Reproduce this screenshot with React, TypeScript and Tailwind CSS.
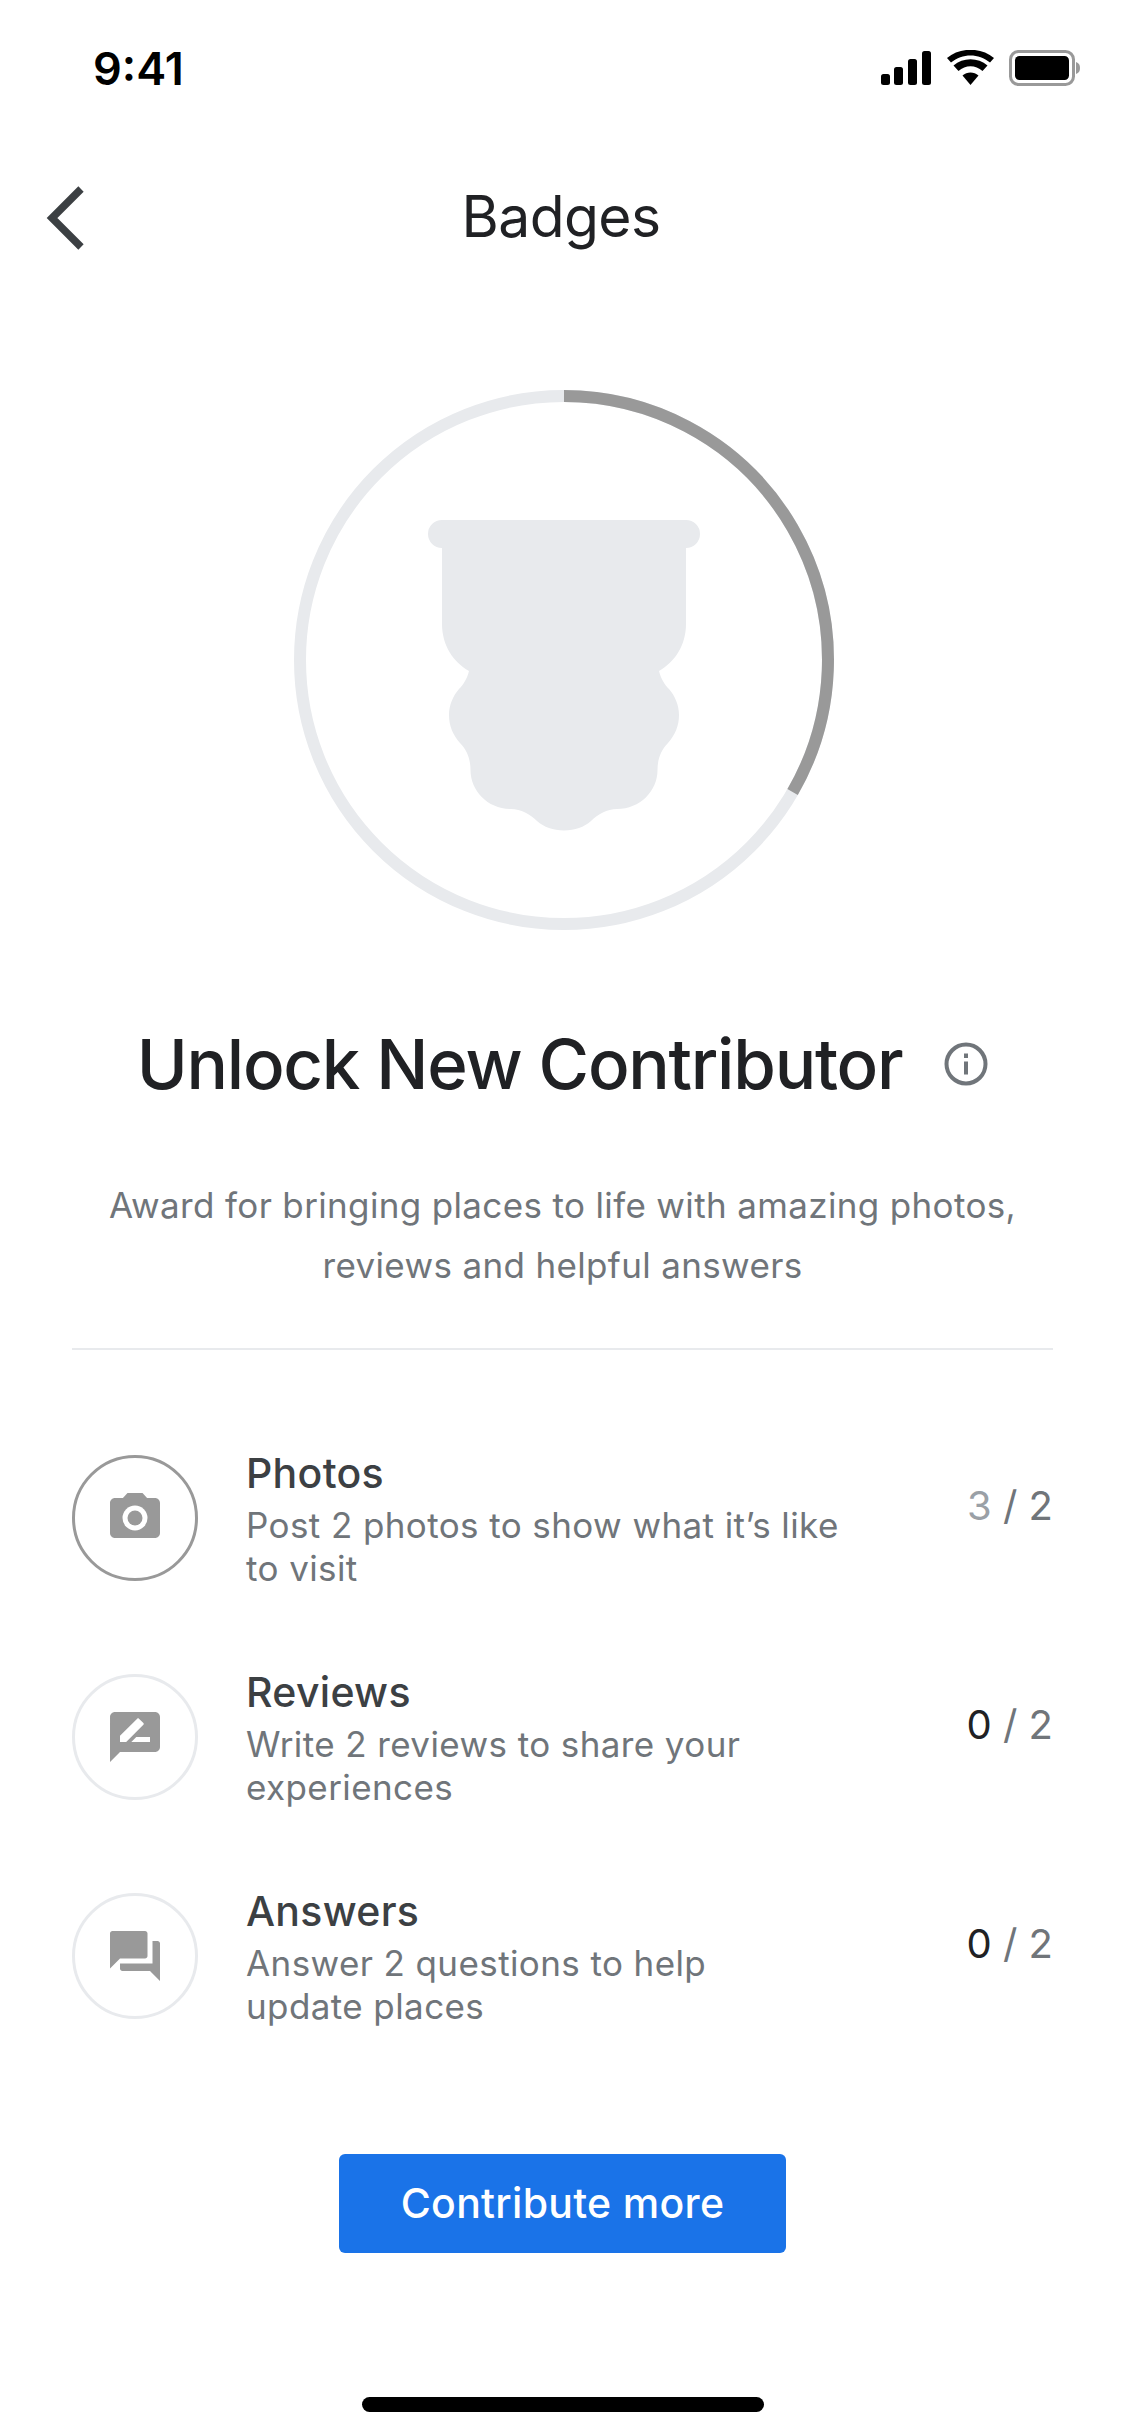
import React from 'react';

const rows = [
  {
    title: 'Photos',
    lines: ['Post 2 photos to show what it’s like', 'to visit'],
    done: 3,
    active: true,
    icon: (
      <>
        <path d="M20 4h-3.17L15 2H9L7.17 4H4c-1.1 0-2 .9-2 2v12c0 1.1.9 2 2 2h16c1.1 0 2-.9 2-2V6c0-1.1-.9-2-2-2z" />
        <circle cx="12" cy="12" r="5" fill="#ffffff" />
        <circle cx="12" cy="12" r="3" />
      </>
    ),
  },
  {
    title: 'Reviews',
    lines: ['Write 2 reviews to share your', 'experiences'],
    done: 0,
    active: false,
    icon: (
      <path d="M20 2H4c-1.1 0-1.99.9-1.99 2L2 22l4-4h14c1.1 0 2-.9 2-2V4c0-1.1-.9-2-2-2zM6 14v-2.47l6.88-6.88c.2-.2.51-.2.71 0l1.77 1.77c.2.2.2.51 0 .71L8.47 14H6zm12 0h-7.5l2-2H18v2z" />
    ),
  },
  {
    title: 'Answers',
    lines: ['Answer 2 questions to help', 'update places'],
    done: 0,
    active: false,
    icon: (
      <path d="M21 6h-2v9H6v2c0 .55.45 1 1 1h11l4 4V7c0-.55-.45-1-1-1zm-4 6V3c0-.55-.45-1-1-1H3c-.55 0-1 .45-1 1v14l4-4h10c.55 0 1-.45 1-1z" />
    ),
  },
];

const StatusIcons = () => (
  <svg width="200" height="36" viewBox="0 0 200 36" className="block">
    <rect x="0" y="24" width="9" height="11" rx="2.5" fill="#000" />
    <rect x="13" y="17" width="9" height="18" rx="2.5" fill="#000" />
    <rect x="27" y="9" width="9" height="26" rx="2.5" fill="#000" />
    <rect x="41" y="1" width="9" height="34" rx="2.5" fill="#000" />
    <path d="M89.5 35 L81.5 25.5 C86 21.5 93 21.5 97.5 25.5 Z" fill="#000" />
    <path d="M77.5 21 L72.5 15.5 C82 7 97 7 106.5 15.5 L101.5 21 C94.5 14.5 84.5 14.5 77.5 21 Z" fill="#000" />
    <path d="M70 12.5 L66 8 C79 -3 100 -3 113 8 L109 12.5 C97.5 3 81.5 3 70 12.5 Z" fill="#000" />
    <rect x="129.5" y="1.5" width="63" height="33" rx="8" fill="none" stroke="#999" strokeWidth="3" />
    <rect x="134" y="6" width="54" height="24" rx="4.5" fill="#000" />
    <path d="M195 12 C198 13 199 15 199 18 C199 21 198 23 195 24 Z" fill="#999" />
  </svg>
);

export default function App() {
  return (
    <div className="w-[1125px] h-[2436px] bg-white flex flex-col overflow-hidden font-['Inter',sans-serif]">
      {/* Status bar */}
      <div className="h-[136px] flex items-center justify-between pl-[93px] pr-[44px]">
        <span className="text-[45px] leading-none font-semibold text-black">9:41</span>
        <StatusIcons />
      </div>

      {/* Header */}
      <div className="h-[164px] grid grid-cols-[1fr_auto_1fr] items-center pl-[46px] pr-[49px]">
        <svg width="40" height="64" viewBox="0 0 40 64" className="block">
          <path d="M35 3 L6 32 L35 61" fill="none" stroke="#3c4043" strokeWidth="7.5" />
        </svg>
        <span className="text-[57px] leading-none tracking-[-0.6px] text-[#202124] -mt-[4px]">Badges</span>
        <div />
      </div>

      {/* Progress ring */}
      <svg width="540" height="540" viewBox="0 0 540 540" className="block ml-[294px] mt-[90px]">
        <circle cx="270" cy="270" r="264" fill="none" stroke="#e8eaed" strokeWidth="12" />
        <path d="M270 6 A264 264 0 0 1 498.6 402" fill="none" stroke="#999999" strokeWidth="12" />
        <path
          fill="#e8eaed"
          d="M148 130 H392 a14 14 0 0 1 0 28 V234 C392 255 381 272 365 281 C367 289 371 295 375 299 C381 306 385 315 385 325 C385 336 381 345 374 353 C367 360 363.5 369 363.5 380 C363.5 401 346 419 323 419 C313 419 304 424 297 431 C290 437 281 440.5 270 440.5 C259 440.5 250 437 243 431 C236 424 227 419 217 419 C194 419 176.5 401 176.5 380 C176.5 369 173 360 166 353 C159 345 155 336 155 325 C155 315 159 306 165 299 C169 295 173 289 175 281 C159 272 148 255 148 234 V158 a14 14 0 0 1 0 -28 Z"
        />
      </svg>

      {/* Title */}
      <div className="mt-[84px] h-[100px] flex items-center justify-center gap-[42px]">
        <h1 className="text-[69px] leading-none font-medium tracking-[-1.25px] text-[#202124]">Unlock New Contributor</h1>
        <svg width="44" height="44" viewBox="0 0 44 44" className="block">
          <circle cx="22" cy="22" r="19.5" fill="none" stroke="#70757a" strokeWidth="4" />
          <rect x="20" y="19.5" width="4" height="13" fill="#70757a" />
          <rect x="20" y="11.5" width="4" height="4.5" fill="#70757a" />
        </svg>
      </div>

      <p className="mt-[61px] text-center text-[35px] leading-[60px] tracking-[0.35px] text-[#70757a]">
        Award for bringing places to life with amazing photos,
        <br />
        reviews and helpful answers
      </p>

      <div className="mt-[53px] mx-[72px] h-[2px] bg-[#e8eaed]" />

      {/* Tasks */}
      <div className="mt-[58px] px-[72px] flex flex-col">
        {rows.map((row) => (
          <div key={row.title} className="h-[219px] flex items-center">
            <div
              className={`w-[126px] h-[126px] shrink-0 rounded-full border-[3px] flex items-center justify-center ${
                row.active ? 'border-[#999999]' : 'border-[#e8eaed]'
              }`}
            >
              <svg width="60" height="60" viewBox="0 0 24 24" fill="#999999" className="block">
                {row.icon}
              </svg>
            </div>
            <div className="ml-[48px] pt-[4px] flex flex-col">
              <span className="text-[41px] leading-[48px] font-medium tracking-[0.3px] text-[#3c4043]">{row.title}</span>
              <span className="mt-[7px] text-[35px] leading-[43px] tracking-[0.4px] text-[#70757a]">
                {row.lines[0]}
                <br />
                {row.lines[1]}
              </span>
            </div>
            <div className="ml-auto mb-[24px] text-[40px] leading-none text-[#70757a]">
              <span className={row.active ? 'text-[#9aa0a6]' : 'text-[#202124]'}>{row.done}</span> / 2
            </div>
          </div>
        ))}
      </div>

      <button className="mt-[89px] mx-auto w-[447px] h-[99px] rounded-[6px] bg-[#1a73e8] text-white text-[41px] tracking-[0.3px] font-medium">
        Contribute more
      </button>

      <div className="mt-[144px] mx-auto w-[402px] h-[15px] rounded-full bg-black" />
    </div>
  );
}
